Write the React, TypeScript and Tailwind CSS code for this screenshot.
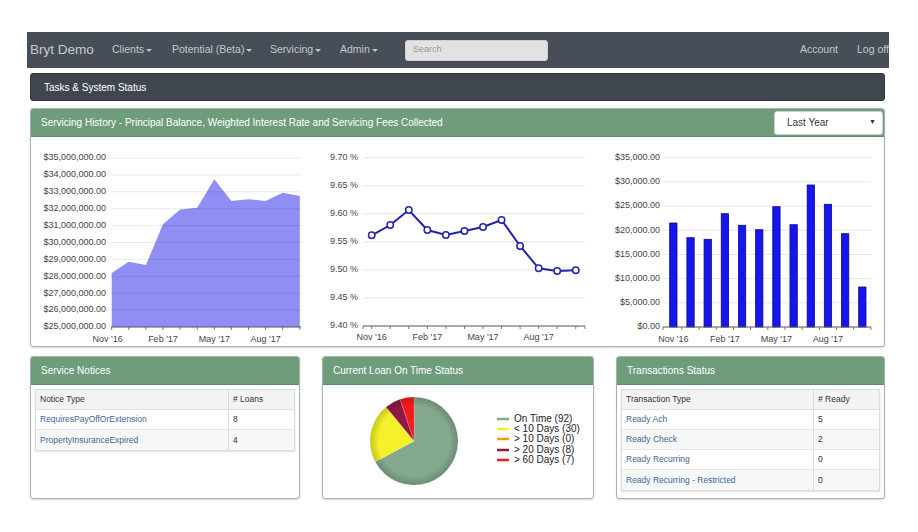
import React from "react";

const font = "font-['Liberation_Sans',Arial,sans-serif]";

function Caret() {
  return (
    <span className="inline-block w-0 h-0 ml-[2px] align-middle border-x-[3px] border-t-[3px] border-x-transparent border-t-current" />
  );
}

function NavBar() {
  return (
    <div className="ml-[27px] w-[862px] h-[36px] bg-[#474e57] flex items-center text-[10.5px] text-[#c3c7cb] whitespace-nowrap">
      <div className="w-[85px] pl-[3px] text-[13.5px] text-[#c8cacc]">Bryt Demo</div>
      <div className="w-[60px]">Clients<Caret /></div>
      <div className="w-[98px]">Potential (Beta)<Caret /></div>
      <div className="w-[70px]">Servicing<Caret /></div>
      <div className="w-[65px]">Admin<Caret /></div>
      <div className="w-[143px] h-[21px] bg-[#e2e2e2] rounded-[3px] border border-[#cfcfcf] flex items-center pl-[7px] text-[9px] text-[#9a9a9a]">
        Search
      </div>
      <div className="flex-1" />
      <div className="w-[57px]">Account</div>
      <div className="w-[32px]">Log off</div>
    </div>
  );
}

function Panel({ title, right, children, className = "" }: { title: string; right?: React.ReactNode; children: React.ReactNode; className?: string }) {
  return (
    <div className={`border border-[#a9b3ab] rounded-[3px] shadow-[0_1px_2px_rgba(0,0,0,0.15)] overflow-hidden bg-white ${className}`}>
      <div className="h-[28px] bg-[#6f9d7b] border-b border-[#5f8b6b] flex items-center pl-[10px] pr-[1px] text-[10px] text-white">
        <span className="flex-1">{title}</span>
        {right}
      </div>
      {children}
    </div>
  );
}

const labelStyle = { fontSize: 9, fill: "#444" };

function BalanceChart() {
  const vals = [28.2, 28.86, 28.67, 31.08, 31.96, 32.06, 33.74, 32.46, 32.56, 32.46, 32.95, 32.75];
  const xs = vals.map((_, i) => 80.7 + i * 17.1);
  const y = (v: number) => 21 + (35 - v) * 16.9;
  const pts = vals.map((v, i) => `${xs[i]},${y(v)}`).join(" L");
  const area = `M${xs[0]},190 L${pts} L${xs[11]},190 Z`;
  const labels = ["Nov '16", "Feb '17", "May '17", "Aug '17"];
  return (
    <svg width={280} height={211}>
      <path d={area} fill="#8e8ef4" />
      {Array.from({ length: 10 }).map((_, k) => (
        <line key={k} x1={80} x2={270} y1={21 + k * 16.9} y2={21 + k * 16.9} stroke="#000" strokeOpacity={0.09} />
      ))}
      {Array.from({ length: 11 }).map((_, k) => (
        <text key={k} x={75} y={21 + k * 16.9} textAnchor="end" dominantBaseline="middle" style={labelStyle}>
          ${(35 - k).toString()},000,000.00
        </text>
      ))}
      <line x1={80} x2={270} y1={190} y2={190} stroke="#555" />
      {xs.map((x, i) => (
        <line key={i} x1={x} x2={x} y1={190} y2={193} stroke="#777" />
      ))}
      {labels.map((l, j) => (
        <text key={l} x={xs[j * 3] - (j === 0 ? 4 : 0)} y={205} textAnchor="middle" style={labelStyle}>
          {l}
        </text>
      ))}
    </svg>
  );
}

function RateChart() {
  const ys = [98.3, 88, 73, 93, 98, 94, 90, 83, 109, 131.3, 134, 133.3];
  const xs = ys.map((_, i) => 60.7 + i * 18.55);
  const d = "M" + ys.map((v, i) => `${xs[i]},${v}`).join(" L");
  const labels = ["Nov '16", "Feb '17", "May '17", "Aug '17"];
  const rates = ["9.70", "9.65", "9.60", "9.55", "9.50", "9.45", "9.40"];
  return (
    <svg width={283} height={211}>
      {rates.map((r, k) => (
        <React.Fragment key={r}>
          {k < 6 && <line x1={52} x2={274} y1={20.7 + k * 28.05} y2={20.7 + k * 28.05} stroke="#e6e6e6" />}
          <text x={47} y={20.7 + k * 28.05} textAnchor="end" dominantBaseline="middle" style={labelStyle}>
            {r} %
          </text>
        </React.Fragment>
      ))}
      <line x1={52} x2={274} y1={189} y2={189} stroke="#555" />
      {[52, ...xs, 274].map((x, i) => (
        <line key={i} x1={x} x2={x} y1={189} y2={192} stroke="#777" />
      ))}
      <path d={d} fill="none" stroke="#2222aa" strokeWidth={2} />
      {xs.map((x, i) => (
        <circle key={i} cx={x} cy={ys[i]} r={3.2} fill="#fff" stroke="#2222aa" strokeWidth={1.5} />
      ))}
      {labels.map((l, j) => (
        <text key={l} x={xs[j * 3]} y={203} textAnchor="middle" style={labelStyle}>
          {l}
        </text>
      ))}
    </svg>
  );
}

function FeesChart() {
  const tops = [86, 100.7, 102.3, 76.7, 88.3, 92.7, 69.7, 87.7, 48, 67.3, 96.7, 150];
  const xs = tops.map((_, i) => 79.3 + i * 17.18);
  const labels = ["Nov '16", "Feb '17", "May '17", "Aug '17"];
  const fees = ["$35,000.00", "$30,000.00", "$25,000.00", "$20,000.00", "$15,000.00", "$10,000.00", "$5,000.00", "$0.00"];
  return (
    <svg width={290} height={211}>
      {fees.map((f, k) => (
        <React.Fragment key={f}>
          {k < 7 && <line x1={69} x2={277} y1={20.7 + k * 24.19} y2={20.7 + k * 24.19} stroke="#e6e6e6" />}
          <text x={66} y={20.7 + k * 24.19} textAnchor="end" dominantBaseline="middle" style={labelStyle}>
            {f}
          </text>
        </React.Fragment>
      ))}
      {xs.map((x, i) => (
        <rect key={i} x={x - 3.6} y={tops[i]} width={7.3} height={190 - tops[i]} fill="#1515ee" stroke="#0a0a80" strokeWidth={0.8} />
      ))}
      <line x1={69} x2={277} y1={190} y2={190} stroke="#555" />
      {[69, ...xs.map((x) => x + 8.6)].map((x, i) => (
        <line key={i} x1={x} x2={x} y1={190} y2={193} stroke="#777" />
      ))}
      {labels.map((l, j) => (
        <text key={l} x={xs[j * 3]} y={205} textAnchor="middle" style={labelStyle}>
          {l}
        </text>
      ))}
    </svg>
  );
}

function PieChart() {
  const cx = 91;
  const cy = 56;
  const r = 44;
  const data = [
    { label: "On Time (92)", v: 92, c: "#84a98d" },
    { label: "< 10 Days (30)", v: 30, c: "#f4f12a" },
    { label: "> 10 Days (0)", v: 0, c: "#f39a1e" },
    { label: "> 20 Days (8)", v: 8, c: "#8c1a45" },
    { label: "> 60 Days (7)", v: 7, c: "#f21c1c" },
  ];
  const total = data.reduce((s, d) => s + d.v, 0);
  const pt = (a: number) => [cx + r * Math.sin(a), cy - r * Math.cos(a)];
  let acc = 0;
  const slices = data
    .filter((d) => d.v > 0)
    .map((d) => {
      const a0 = (acc / total) * Math.PI * 2;
      acc += d.v;
      const a1 = (acc / total) * Math.PI * 2;
      const [x0, y0] = pt(a0);
      const [x1, y1] = pt(a1);
      const large = a1 - a0 > Math.PI ? 1 : 0;
      return { d: `M${cx},${cy} L${x0},${y0} A${r},${r} 0 ${large} 1 ${x1},${y1} Z`, c: d.c };
    });
  const rows = [34, 44, 54, 65, 75];
  return (
    <svg width={269} height={112}>
      <defs>
        <radialGradient id="shade" cx="50%" cy="50%" r="50%">
          <stop offset="80%" stopColor="#000" stopOpacity={0} />
          <stop offset="100%" stopColor="#000" stopOpacity={0.18} />
        </radialGradient>
      </defs>
      {slices.map((s, i) => (
        <path key={i} d={s.d} fill={s.c} stroke="#fff" strokeOpacity={0.3} strokeWidth={0.5} />
      ))}
      <circle cx={cx} cy={cy} r={r} fill="url(#shade)" />
      {data.map((d, i) => (
        <React.Fragment key={d.label}>
          <line x1={174} x2={186} y1={rows[i]} y2={rows[i]} stroke={d.c} strokeWidth={2.5} />
          <text x={191} y={rows[i]} dominantBaseline="middle" style={{ fontSize: 10, fill: "#222" }}>
            {d.label}
          </text>
        </React.Fragment>
      ))}
    </svg>
  );
}

function DataTable({ head, rows }: { head: [string, string]; rows: [string, string][] }) {
  return (
    <div className="mx-[4px] mt-[4px] border border-[#dcdcdc] shadow-[0_1px_2px_rgba(0,0,0,0.12)] text-[8.5px]">
      <div className="flex h-[20px] bg-[#f3f3f3] text-[#333] border-b border-[#e2e2e2]">
        <div className="flex-1 flex items-center pl-[4px] border-r border-[#dcdcdc]">{head[0]}</div>
        <div className="w-[65px] flex items-center pl-[4px]">{head[1]}</div>
      </div>
      {rows.map(([a, b], i) => (
        <div key={a} className={`flex h-[20px] border-b last:border-b-0 border-[#e6e6e6] ${i % 2 === 1 ? "bg-[#f7f7f7]" : "bg-white"}`}>
          <div className="flex-1 flex items-center pl-[4px] border-r border-[#dcdcdc] text-[#3d6796]">{a}</div>
          <div className="w-[65px] flex items-center pl-[4px] text-[#333]">{b}</div>
        </div>
      ))}
    </div>
  );
}

export default function App() {
  return (
    <div className={`${font} bg-white w-[918px] h-[532px] pt-[32px] overflow-hidden`}>
      <NavBar />
      <div className="ml-[30px] w-[855px]">
        <div className="mt-[5px] h-[28px] bg-[#3f464e] border border-[#2f353b] rounded-[3px] flex items-center pl-[13px] text-[10px] text-white">
          Tasks &amp; System Status
        </div>
        <Panel
          className="mt-[7px] h-[239px]"
          title="Servicing History - Principal Balance, Weighted Interest Rate and Servicing Fees Collected"
          right={
            <div className="w-[109px] h-[24px] bg-white rounded-[3px] border border-[#cfcfcf] flex items-center pl-[12px] pr-[6px] text-[10px] text-[#333]">
              <span className="flex-1">Last Year</span>
              <span className="text-[7px]">▼</span>
            </div>
          }
        >
          <div className="flex">
            <BalanceChart />
            <RateChart />
            <FeesChart />
          </div>
        </Panel>
        <div className="mt-[9px] flex">
          <Panel className="w-[270px] h-[143px]" title="Service Notices">
            <DataTable
              head={["Notice Type", "# Loans"]}
              rows={[
                ["RequiresPayOffOrExtension", "8"],
                ["PropertyInsuranceExpired", "4"],
              ]}
            />
          </Panel>
          <Panel className="ml-[22px] w-[272px] h-[143px]" title="Current Loan On Time Status">
            <PieChart />
          </Panel>
          <Panel className="ml-[22px] w-[269px] h-[143px]" title="Transactions Status">
            <DataTable
              head={["Transaction Type", "# Ready"]}
              rows={[
                ["Ready Ach", "5"],
                ["Ready Check", "2"],
                ["Ready Recurring", "0"],
                ["Ready Recurring - Restricted", "0"],
              ]}
            />
          </Panel>
        </div>
      </div>
    </div>
  );
}
